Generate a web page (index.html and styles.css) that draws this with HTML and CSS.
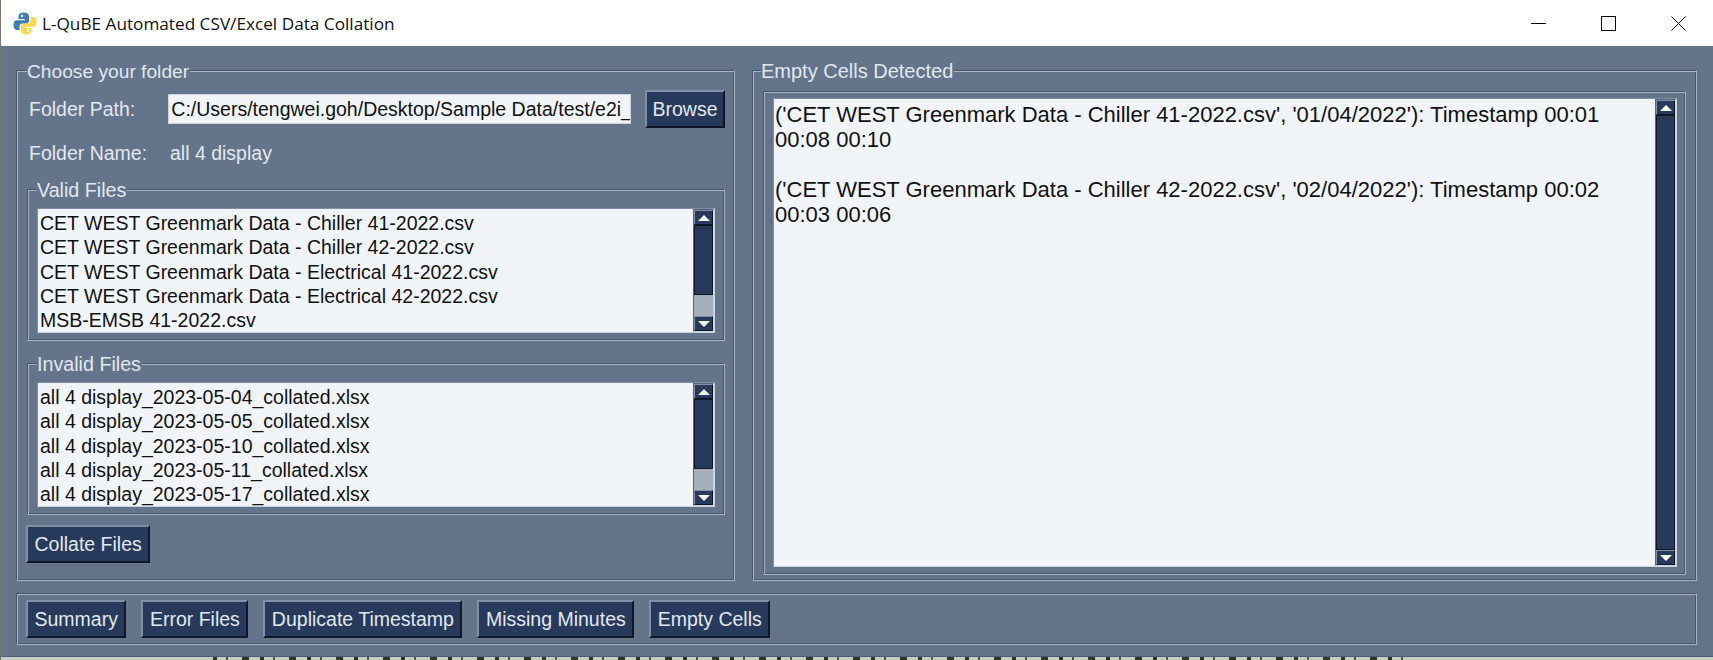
FILE: index.html
```html
<!DOCTYPE html>
<html>
<head>
	<title>L-QuBE Automated CSV/Excel Data Collation</title>
	<link rel="stylesheet" href="styles.css">
</head>
<body>

	<div class="titlebar">
		<svg class="appicon" width="24" height="23" viewBox="0 0 24 23">
			<path fill="#3f7db3" d="M11 0.500C7.500 0.500 5.500 2 5.500 4.500V7H12V8.200H4C1.500 8.200 0.500 10 0.500 13C0.500 16.500 2 18 4 18H6.500V14.500C6.500 12.800 8 11.500 9.500 11.500H13.500C15 11.500 16 10.500 16 9V4.500C16 2 14 0.500 11 0.500Z"/>
			<path fill="#ffd84d" d="M13 22.500C16.500 22.500 18.500 21 18.500 18.500V16H12V14.800H20C22.500 14.800 23.500 13 23.500 10C23.500 6.500 22 5 20 5H17.500V8.500C17.500 10.200 16 11.500 14.500 11.500H10.500C9 11.500 8 12.500 8 14V18.500C8 21 10 22.500 13 22.500Z"/>
			<circle cx="9" cy="4" r="1.200" fill="#fff"/>
			<circle cx="15" cy="19" r="1.200" fill="#fff"/>
		</svg>
		<span class="wintitle">L-QuBE Automated CSV/Excel Data Collation</span>
		<div class="winbtns">
			<svg width="15" height="15" viewBox="0 0 15 15"><path d="M0 7.500H15" stroke="#000" fill="none"/></svg>
			<svg width="15" height="15" viewBox="0 0 15 15"><rect x="0.500" y="0.500" width="14" height="14" stroke="#000" fill="none"/></svg>
			<svg width="15" height="15" viewBox="0 0 15 15"><path d="M0.500 0.500L14.500 14.500M14.500 0.500L0.500 14.500" stroke="#000" fill="none"/></svg>
		</div>
	</div>

	<div class="content">
		<div class="panels">
			<fieldset class="frame left">
				<legend>Choose your folder</legend>
				<div class="row pathrow">
					<span class="lbl">Folder Path:</span>
					<div class="entry">C:/Users/tengwei.goh/Desktop/Sample Data/test/e2i_</div>
					<button class="btn browse">Browse</button>
				</div>
				<div class="row namerow">
					<span class="lbl">Folder Name:</span>
					<span class="value">all 4 display</span>
				</div>

				<fieldset class="frame files">
					<legend>Valid Files</legend>
					<div class="box listbox">
						<div class="lines">
							<div>CET WEST Greenmark Data - Chiller 41-2022.csv</div>
							<div>CET WEST Greenmark Data - Chiller 42-2022.csv</div>
							<div>CET WEST Greenmark Data - Electrical 41-2022.csv</div>
							<div>CET WEST Greenmark Data - Electrical 42-2022.csv</div>
							<div>MSB-EMSB 41-2022.csv</div>
						</div>
						<div class="scroll">
							<div class="arrow"><i class="up"></i></div>
							<div class="trough"><div class="thumb short"></div></div>
							<div class="arrow"><i class="down"></i></div>
						</div>
					</div>
				</fieldset>

				<fieldset class="frame files">
					<legend>Invalid Files</legend>
					<div class="box listbox">
						<div class="lines">
							<div>all 4 display_2023-05-04_collated.xlsx</div>
							<div>all 4 display_2023-05-05_collated.xlsx</div>
							<div>all 4 display_2023-05-10_collated.xlsx</div>
							<div>all 4 display_2023-05-11_collated.xlsx</div>
							<div>all 4 display_2023-05-17_collated.xlsx</div>
						</div>
						<div class="scroll">
							<div class="arrow"><i class="up"></i></div>
							<div class="trough"><div class="thumb short"></div></div>
							<div class="arrow"><i class="down"></i></div>
						</div>
					</div>
				</fieldset>

				<button class="btn collate">Collate Files</button>
			</fieldset>

			<fieldset class="frame right">
				<legend>Empty Cells Detected</legend>
				<div class="sunken">
					<div class="box textbox">
						<div class="text">
							<p>('CET WEST Greenmark Data - Chiller 41-2022.csv', '01/04/2022'): Timestamp 00:01 00:08 00:10</p>
							<p>('CET WEST Greenmark Data - Chiller 42-2022.csv', '02/04/2022'): Timestamp 00:02 00:03 00:06</p>
						</div>
						<div class="scroll">
							<div class="arrow"><i class="up"></i></div>
							<div class="trough"><div class="thumb full"></div></div>
							<div class="arrow"><i class="down"></i></div>
						</div>
					</div>
				</div>
			</fieldset>
		</div>

		<div class="frame toolbar">
			<button class="btn">Summary</button>
			<button class="btn">Error Files</button>
			<button class="btn">Duplicate Timestamp</button>
			<button class="btn">Missing Minutes</button>
			<button class="btn">Empty Cells</button>
		</div>
	</div>

	<!-- window behind, only its top edge shows -->
	<div class="behind"><div class="marks"></div></div>

</body>
</html>
```

FILE: styles.css
```css
*{
	box-sizing: border-box;
}

html, body{
	height: 100%;
}

body{
	margin: 0;
	font-family: "Liberation Sans", sans-serif;
	font-size: 19.5px;
	background: #c9c9c9;
	border-left: 1px solid #77786c;
	overflow: hidden;
}

.titlebar{
	height: 46px;
	background: #fff;
	display: flex;
	align-items: center;
	padding-left: 12px;
}

.wintitle{
	font-family: "Open Sans", sans-serif;
	font-size: 17.200px;
	margin-left: 5px;
	color: #111;
}

.winbtns{
	margin-left: auto;
	display: flex;
	gap: 55px;
	padding-right: 27px;
}

.content{
	height: 611px;
	background: #64748b;
	border-bottom: 1px solid #4f5d72;
	padding: 12px 16px 0 15px;
	color: #e2e8f0;
}

.behind{
	height: 3px;
	overflow: hidden;
}

.marks{
	height: 3px;
	width: 1195px;
	margin-left: 212px;
	background: repeating-linear-gradient(90deg, #333 0 4px, transparent 4px 13px, #555 13px 15px, transparent 15px 29px, #333 29px 36px, transparent 36px 47px);
}

.panels{
	display: flex;
	gap: 17px;
	height: 523px;
}

.frame{
	margin: 0;
	min-width: 0;
	border: 1px solid;
	border-color: #48566b #a9b4c2 #a9b4c2 #48566b;
	box-shadow: inset 1px 1px 0 #a9b4c2, inset -1px -1px 0 #48566b;
}

legend{
	padding: 3px 1px 0 0;
	margin-left: 0;
	line-height: 21px;
	font-size: 20px;
	background: linear-gradient(#64748b, #64748b);
}

.left > legend{
	font-size: 19.200px;
}

.files > legend{
	font-size: 19.700px;
}

.left{
	width: 719px;
	padding: 0 9px 0 10px;
}

.right{
	flex: 1;
	padding: 9px 10px 5px 10px;
}

.right legend{
	margin-left: -2px;
}

.row{
	display: flex;
	align-items: center;
}

.lbl{
	width: 142px;
	padding-left: 2px;
}

.value{
	padding-left: 1px;
}

.pathrow{
	height: 38px;
	margin-top: 8px;
}

.namerow{
	height: 40px;
	margin-top: 5px;
}

.entry{
	width: 465px;
	height: 30px;
	background: #f1f5f9;
	color: #111;
	border: 1px solid #cbd5e1;
	padding: 0 0 0 2px;
	line-height: 28px;
	overflow: hidden;
	white-space: nowrap;
	margin-right: 14px;
}

.btn{
	height: 38px;
	padding: 0 6.500px;
	background: #273a5c;
	color: #e2e8f0;
	font: inherit;
	border: 2px solid;
	border-color: #8290a5 #0f1726 #0f1726 #8290a5;
}

.browse{
	padding: 0 5.500px;
}

.collate{
	margin-top: 10px;
	margin-left: -1px;
}

.files{
	margin-top: 4px;
	padding: 7px 9px 0;
	height: 164px;
}

.files + .files{
	margin-top: 10px;
}

.box{
	display: flex;
	background: #f1f5f9;
	color: #111;
	border: 1px solid;
	border-color: #8290a5 #cbd5e1 #cbd5e1 #8290a5;
}

.listbox{
	height: 125px;
}

.lines{
	flex: 1;
	line-height: 24.300px;
	padding: 2px 0 0 2px;
	white-space: nowrap;
	overflow: hidden;
}

.scroll{
	width: 21px;
	display: flex;
	flex-direction: column;
	background: #a5b0bc;
	border: 1px solid;
	border-color: #55647a #cbd5e1 #cbd5e1 #55647a;
	flex-shrink: 0;
}

.arrow{
	height: 15px;
	flex-shrink: 0;
	background: #273a5c;
	display: flex;
	align-items: center;
	justify-content: center;
	border: 1px solid;
	border-color: #8290a5 #0f1726 #0f1726 #8290a5;
}

.arrow i{
	width: 0;
	height: 0;
	border-left: 6px solid transparent;
	border-right: 6px solid transparent;
}

.arrow .up{
	border-bottom: 6px solid #fff;
}

.arrow .down{
	border-top: 6px solid #fff;
}

.trough{
	flex: 1;
}

.thumb{
	background: #273a5c;
	border: 1px solid #0f1726;
}

.thumb.short{
	height: 70px;
}

.thumb.full{
	height: 100%;
}

.sunken{
	height: 100%;
	border: 1px solid;
	border-color: #48566b #a9b4c2 #a9b4c2 #48566b;
	box-shadow: inset 1px 1px 0 #a9b4c2, inset -1px -1px 0 #48566b;
	padding: 6px 8px 7px 9px;
}

.textbox{
	height: 100%;
}

.text{
	flex: 1;
	padding: 4px 1px;
	font-size: 22px;
	line-height: 24.700px;
}

.text p{
	margin: 0 0 25.700px;
}

.toolbar{
	margin-top: 12px;
	height: 52px;
	padding: 6px 9px;
	display: flex;
	gap: 15px;
}
```
